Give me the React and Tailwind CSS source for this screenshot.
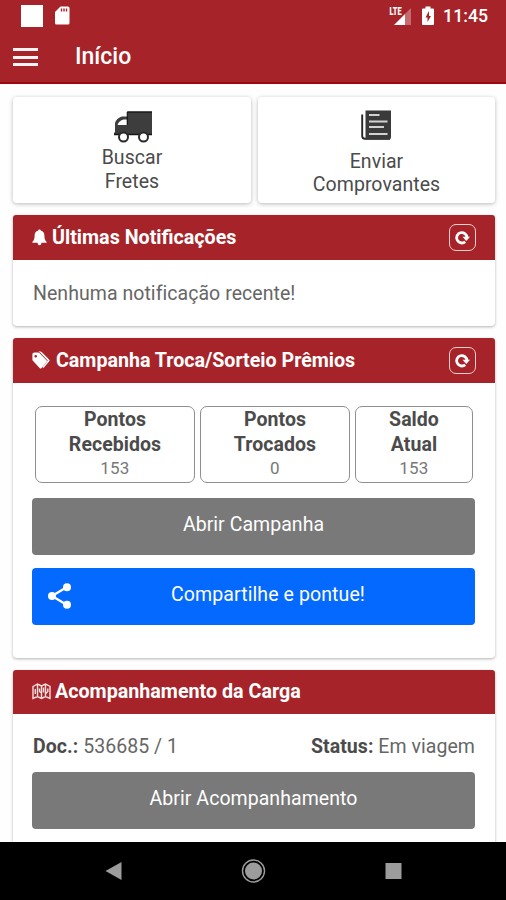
import React from 'react';

function RefreshIcon() {
  return (
    <span className="flex h-[27px] w-[27px] items-center justify-center rounded-[7px] border-[1.500px] border-[#f6cfcf]">
      <svg width="17" height="16" viewBox="0 0 17 16" fill="none">
        <path d="M11.200 11.700A5.200 5.200 0 1 1 13 7.500" stroke="white" strokeWidth="2.800" />
        <path d="M8.500 6.800h7.500l-3.700 4.200z" fill="white" />
      </svg>
    </span>
  );
}

function BellIcon() {
  return (
    <svg width="15" height="17" viewBox="0 0 15 17" fill="white">
      <path d="M7.500.4c.8 0 1.200.5 1.200 1.200 2.500.6 3.700 2.400 3.700 4.900 0 3.300.6 4.900 2.200 6.200v1H.4v-1c1.600-1.300 2.200-2.900 2.200-6.200 0-2.500 1.200-4.300 3.700-4.900C6.300.9 6.700.4 7.500.4zM5.600 13.700h3.800c-.2 1.800-.9 2.500-1.900 2.500s-1.700-.7-1.900-2.500z" />
    </svg>
  );
}

function TagsIcon() {
  return (
    <svg width="18" height="19" viewBox="0 0 18 19" fill="white">
      <path fillRule="evenodd" d="M.4 3.600C.4 2.300 1.200 1.500 2.500 1.500H6c.7 0 1.200.2 1.700.7l6.800 7c.6.600.6 1.300 0 1.900l-5 5.800c-.6.700-1.300.7-1.900 0L.9 9.800Q.4 9.200.4 8.500zM3.700 3.900a1.300 1.300 0 1 0 0 2.600 1.300 1.300 0 0 0 0-2.600z" />
      <path d="M6.300.5h2c.6 0 1.100.2 1.600.700l7.200 7.300c.6.600.6 1.300 0 1.900l-5.600 6.500-1.200-.8 4.900-5.700c.5-.6.5-1 0-1.500L8.300 1.800z" />
    </svg>
  );
}

function MapIcon() {
  return (
    <svg className="mb-[2px]" width="19" height="17" viewBox="0 0 19 17" fill="none" stroke="#f9dede" strokeWidth="1.400">
      <path d="M1 3.500L5.500 1l4 2 4-2L18 3.500v12l-4.500-2-4 2-4-2-4.500 2zM5.500 1v12.500M9.500 3v12.500M13.500 1v12.500M3.300 6v5M7.500 5.500v3l2 1.500M11.500 4.500v5M15.800 5.500v3l-2 2" />
    </svg>
  );
}

function TruckIcon() {
  return (
    <svg className="ml-[2px]" width="39" height="32" viewBox="0 0 39 32">
      <path fillRule="evenodd" fill="#3d3d3d" d="M13.500 1H38v23H0v-2.500h1V13c0-3 3-6.500 7-7.500h5.500zM3.500 14H13V8.500H9.500C6.500 9.500 4.500 11 3.500 14z" />
      <path d="M13.200 1H38M0 23.500h38" stroke="#171717" strokeWidth="1.500" />
      <path d="M13.300 1v13" stroke="#171717" strokeWidth="1.200" />
      <circle cx="9.500" cy="26" r="4.500" fill="white" stroke="#2a2a2a" strokeWidth="2" />
      <circle cx="29.500" cy="26" r="4.500" fill="white" stroke="#2a2a2a" strokeWidth="2" />
    </svg>
  );
}

function NewsIcon() {
  return (
    <svg width="31" height="31" viewBox="0 0 31 31">
      <path d="M1.200 4.500V26q0 2.700 2.700 2.700H29" fill="none" stroke="#262626" strokeWidth="1.900" />
      <path d="M4.500.5H30v26q0 3-2 3H5.500q-1-.3-1-2z" fill="#3a3a3a" />
      <path d="M8 5h10.500M8 11.500h18.500M8 17h15M8 24h18.500" stroke="#d2d2d2" strokeWidth="2.200" />
    </svg>
  );
}

function PanelHeader({ icon, title, className = 'h-[45px]', titleClass, refresh }) {
  return (
    <div className={'flex shrink-0 items-center rounded-t-[3px] bg-[#a62429] px-[19px] text-white ' + className}>
      {icon}
      <h2 className={'whitespace-nowrap text-[19.700px] font-bold leading-[24px] ' + titleClass}>{title}</h2>
      {refresh && <div className="ml-auto"><RefreshIcon /></div>}
    </div>
  );
}

function Score({ width, a, b, value }) {
  return (
    <div className={'flex h-[77px] flex-col items-center rounded-[7px] border border-[#8f8f8f] ' + width}>
      <div className="text-center text-[19.500px] font-bold leading-[25px] tracking-[0.050px] text-[#4b4b4b]">{a}<br />{b}</div>
      <div className="text-[17px] leading-[23px] tracking-[0.200px] text-[#777]">{value}</div>
    </div>
  );
}

export default function App() {
  return (
    <div className="flex h-[900px] w-[506px] flex-col overflow-hidden bg-[#fefefe] font-['Roboto',sans-serif] text-[#666]">
      <header className="h-[84px] shrink-0 border-b-2 border-[#9c080d] bg-[#a62429] text-white">
        <div className="flex h-[31px] items-center pl-[21px] pr-[18px]">
          <span className="h-[22px] w-[22px] bg-white" />
          <svg className="ml-[12px]" width="15" height="19" viewBox="0 0 15 19">
            <path d="M5.500.5H13q1.500 0 1.500 1.500v15q0 1.500-1.500 1.500H1.500Q0 18.500 0 17V6z" fill="white" />
            <path d="M6.500 2.500v3M9 2.500v3M11.500 2.500v3" stroke="#a62429" strokeWidth="1.400" />
          </svg>
          <div className="ml-auto flex items-center">
            <svg width="24" height="20" viewBox="0 0 24 20">
              <path d="M22 2v17h-6V8z" fill="#c56b70" />
              <path d="M16 8v11H5z" fill="white" />
              <text x="0.500" y="8.500" fontFamily="Roboto" fontSize="10.500" fontWeight="900" fill="white" textLength="12" lengthAdjust="spacingAndGlyphs">LTE</text>
            </svg>
            <svg className="ml-[9px]" width="12" height="20" viewBox="0 0 12 20">
              <path d="M3.500.5h5v2H11q1 0 1 1V18q0 1-1 1H1q-1 0-1-1V3.500q0-1 1-1h2.500z" fill="white" />
              <path d="M7 5L3.500 11.500h2V16L9 10H7z" fill="#a62429" />
            </svg>
            <span className="ml-[9px] text-[17.700px] font-medium leading-[22px]">11:45</span>
          </div>
        </div>
        <div className="flex h-[51px] items-center pl-[13px]">
          <div className="flex flex-col gap-[4.500px] pt-px">
            <span className="h-[3px] w-[25px] bg-[#fff4f4]" />
            <span className="h-[3px] w-[25px] bg-[#fff4f4]" />
            <span className="h-[3px] w-[25px] bg-[#fff4f4]" />
          </div>
          <h1 className="ml-[37px] text-[23px] font-medium leading-[28px]">Início</h1>
        </div>
      </header>

      <main className="flex min-h-0 flex-1 flex-col gap-[12px] overflow-hidden pl-[13px] pr-[11px] pt-[13px]">
        <div className="flex h-[106px] shrink-0 gap-[7px] text-center text-[19.500px] leading-[23.500px] tracking-[0.050px] text-[#4b4b4b]">
          <div className="flex w-[238px] flex-col items-center rounded-[4px] bg-white pt-[14px] shadow-[0_1px_4px_rgba(0,0,0,0.280)]">
            <TruckIcon />
            <div className="mt-[3px]">Buscar<br />Fretes</div>
          </div>
          <div className="flex w-[237px] flex-col items-center rounded-[4px] bg-white pt-[13px] shadow-[0_1px_4px_rgba(0,0,0,0.280)]">
            <NewsIcon />
            <div className="mt-[8.500px]">Enviar<br />Comprovantes</div>
          </div>
        </div>

        <section className="h-[111px] shrink-0 rounded-[4px] bg-white shadow-[0_1px_3px_rgba(0,0,0,0.300)]">
          <PanelHeader icon={<BellIcon />} title="Últimas Notificações" titleClass="ml-[5px]" refresh />
          <p className="pl-[20px] pt-[22px] text-[19.500px] leading-[24px] tracking-[0.050px]">Nenhuma notificação recente!</p>
        </section>

        <section className="h-[320px] shrink-0 rounded-[4px] bg-white shadow-[0_1px_3px_rgba(0,0,0,0.300)]">
          <PanelHeader icon={<TagsIcon />} title="Campanha Troca/Sorteio Prêmios" titleClass="ml-[6px] tracking-[-0.030px]" refresh />
          <div className="flex flex-col px-[19px] pt-[23px]">
            <div className="flex gap-[5px] pl-[3px]">
              <Score width="w-[160px]" a="Pontos" b="Recebidos" value="153" />
              <Score width="w-[150px]" a="Pontos" b="Trocados" value="0" />
              <Score width="w-[118px]" a="Saldo" b="Atual" value="153" />
            </div>
            <button className="mt-[15px] h-[57px] w-[443px] rounded-[4px] bg-[#797979] pb-[4px] text-[19.500px] tracking-[0.050px] text-white">Abrir Campanha</button>
            <button className="mt-[13px] flex h-[57px] w-[443px] items-center rounded-[4px] bg-[#0469ff] pl-[16px] text-[19.500px] text-white">
              <svg className="mb-[2px]" width="24" height="26" viewBox="0 0 24 26" fill="white">
                <path d="M19 4L4 13l15 9" fill="none" stroke="white" strokeWidth="2.400" />
                <circle cx="19" cy="4.200" r="4" /><circle cx="4" cy="13" r="4" /><circle cx="19" cy="21.800" r="4" />
              </svg>
              <span className="flex-1 pb-[4px] pr-[11px] text-center tracking-[0.100px]">Compartilhe e pontue!</span>
            </button>
          </div>
        </section>

        <section className="h-[200px] shrink-0 rounded-[4px] bg-white shadow-[0_1px_3px_rgba(0,0,0,0.300)]">
          <PanelHeader className="h-[44px]" icon={<MapIcon />} title="Acompanhamento da Carga" titleClass="ml-[4px]" />
          <div className="px-[19px] pt-[21px]">
            <div className="flex justify-between pl-px pr-px text-[19.500px] leading-[24px] tracking-[0.050px]">
              <span><b className="text-[#4b4b4b]">Doc.:</b> 536685 / 1</span>
              <span><b className="text-[#4b4b4b]">Status:</b> Em viagem</span>
            </div>
            <button className="mt-[13px] h-[57px] w-[443px] rounded-[4px] bg-[#797979] pb-[4px] text-[19.500px] tracking-[0.050px] text-white">Abrir Acompanhamento</button>
          </div>
        </section>
      </main>

      <nav className="h-[58px] shrink-0 bg-black">
        <svg width="506" height="58" viewBox="0 0 506 58">
          <path d="M105.500 29l16-9v18z" fill="#9c9c9c" />
          <circle cx="253.500" cy="29" r="11" fill="none" stroke="#9c9c9c" strokeWidth="1.400" />
          <circle cx="253.500" cy="29" r="8.500" fill="#9c9c9c" />
          <rect x="385.500" y="21" width="16" height="16" fill="#9c9c9c" />
        </svg>
      </nav>
    </div>
  );
}
